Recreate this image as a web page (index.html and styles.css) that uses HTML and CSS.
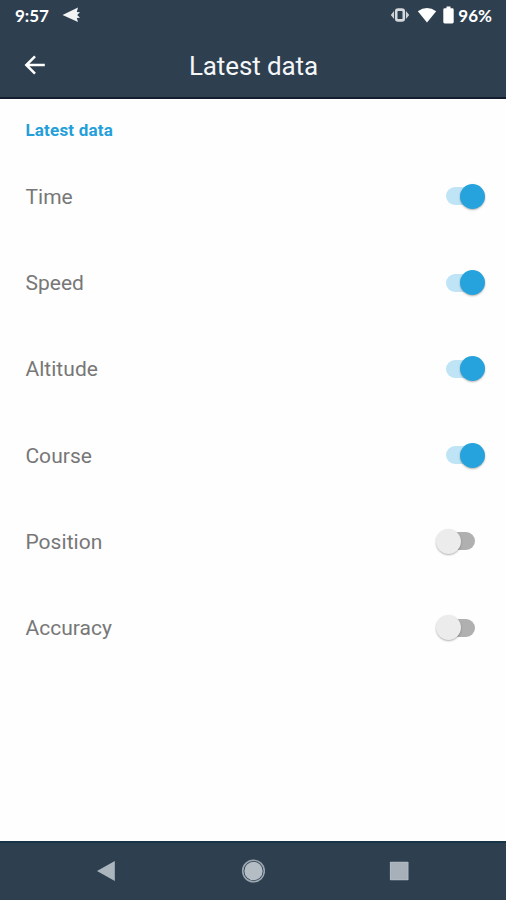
FILE: index.html
```html
<!DOCTYPE html>
<html lang="en">
<head>
    <meta charset="UTF-8">
    <meta name="viewport" content="width=device-width, initial-scale=1.0">
    <title>Latest data</title>
    <link rel="stylesheet" href="styles.css">
</head>
<body>
    <div class="screen">
        <div class="status-bar">
            <span class="clock">9:57</span>
            <svg class="plane" width="19" height="16" viewBox="0 0 19 16">
                <path d="M0.5 8 L16 0.6 L14.8 5 L18 5.3 L15.2 8 L18 10.7 L14.8 11 L16 15 Z" fill="#f1f3f4"/>
            </svg>
            <svg class="vibrate" width="20" height="16" viewBox="0 0 20 16">
                <path d="M4 4 L0.8 8 L4 12 Z M16 4 L19.2 8 L16 12 Z" fill="#ccd1d5"/>
                <rect x="6.2" y="2.6" width="7.6" height="10.8" rx="2" fill="none" stroke="#d5d9dc" stroke-width="2.6"/>
            </svg>
            <svg class="wifi" width="20" height="16" viewBox="0 0 20 16">
                <path d="M0.8 4.2 Q10 -2.4 19.2 4.2 L10 15.6 Z" fill="#fff"/>
            </svg>
            <svg class="battery" width="11" height="18" viewBox="0 0 11 18">
                <path d="M3.5 0.5 H7.5 V2.3 H9.3 Q10.7 2.3 10.7 3.7 V16 Q10.7 17.4 9.3 17.4 H1.7 Q0.3 17.4 0.3 16 V3.7 Q0.3 2.3 1.7 2.3 H3.5 Z" fill="#fff"/>
            </svg>
            <span class="percent">96%</span>
        </div>
        <div class="header">
            <svg class="back" width="22" height="20" viewBox="0 0 22 20">
                <path d="M20.8 10 H2.8 M11 1.3 L2.3 10 L11 18.7" fill="none" stroke="#fff" stroke-width="2.5"/>
            </svg>
            <h1 class="title">Latest data</h1>
        </div>
        <div class="content">
            <h2 class="section-title">Latest data</h2>
            <div class="row">
                <span class="label">Time</span>
                <div class="switch on"><div class="knob"></div></div>
            </div>
            <div class="row">
                <span class="label">Speed</span>
                <div class="switch on"><div class="knob"></div></div>
            </div>
            <div class="row">
                <span class="label">Altitude</span>
                <div class="switch on"><div class="knob"></div></div>
            </div>
            <div class="row">
                <span class="label">Course</span>
                <div class="switch on"><div class="knob"></div></div>
            </div>
            <div class="row">
                <span class="label">Position</span>
                <div class="switch"><div class="knob"></div></div>
            </div>
            <div class="row">
                <span class="label">Accuracy</span>
                <div class="switch"><div class="knob"></div></div>
            </div>
        </div>
        <div class="nav-bar">
            <svg width="20" height="22" viewBox="0 0 20 22">
                <path d="M0 11 L17.8 1 V21 Z" fill="#abb5be"/>
            </svg>
            <svg width="24" height="24" viewBox="0 0 24 24">
                <circle cx="12.5" cy="12" r="10.8" fill="none" stroke="#9ba6af" stroke-width="1.6"/>
                <circle cx="12.5" cy="12" r="9.2" fill="#b5bdc4"/>
            </svg>
            <svg width="20" height="20" viewBox="0 0 20 20">
                <rect x="0.9" y="0.7" width="18.6" height="18.6" rx="0.8" fill="#b2bac1"/>
                <rect x="1.9" y="1.7" width="16.6" height="16.6" fill="#a7b0b9"/>
            </svg>
        </div>
    </div>
</body>
</html>
```
FILE: styles.css
```css
body {
    margin: 0;
    background-color: #fefefe;
    font-family: Roboto, "Liberation Sans", sans-serif;
}
.screen {
    width: 506px;
    height: 900px;
    display: flex;
    flex-direction: column;
    overflow: hidden;
}
.status-bar {
    height: 32px;
    box-sizing: border-box;
    padding: 0 14px 2px 15px;
    background-color: #2e3f50;
    color: #fff;
    display: flex;
    align-items: center;
    font-family: Lato, sans-serif;
    font-size: 17px;
    font-weight: bold;
}
.plane {
    margin-left: 13px;
}
.vibrate {
    margin-left: auto;
}
.wifi {
    margin-left: 7px;
}
.battery {
    margin-left: 6px;
    margin-right: 4px;
}
.header {
    height: 67px;
    box-sizing: border-box;
    border-bottom: 2px solid #141c30;
    background-color: #2e3f50;
    display: grid;
    grid-template-columns: 60px 1fr 60px;
    align-items: center;
}
.back {
    margin-left: 24px;
}
.title {
    margin: 0;
    padding: 2px 0 0 1px;
    color: #f4f6f8;
    font-size: 26px;
    font-weight: normal;
    letter-spacing: -0.1px;
    text-align: center;
}
.content {
    flex: 1;
    padding: 0 31.5px 0 25.4px;
}
.section-title {
    margin: 0;
    height: 54.3px;
    box-sizing: border-box;
    line-height: 62px;
    color: #249fd9;
    font-size: 17px;
    font-weight: bold;
    letter-spacing: 0.2px;
}
.row {
    height: 86.25px;
    display: flex;
    justify-content: space-between;
    align-items: center;
}
.label {
    padding-top: 1px;
    color: #777;
    font-size: 21px;
    letter-spacing: 0.05px;
}
.switch {
    width: 29px;
    height: 18px;
    border-radius: 9px;
    background-color: #b0b0b0;
    display: flex;
    align-items: center;
}
.knob {
    flex: none;
    width: 25px;
    height: 25px;
    margin-left: -10px;
    border-radius: 50%;
    background-color: #ececec;
    box-shadow: 0 1px 2px rgba(0,0,0,0.3);
}
.on {
    background-color: #bee4f5;
}
.on .knob {
    margin-left: 14px;
    background-color: #26a3dd;
}
.nav-bar {
    height: 59px;
    box-sizing: border-box;
    padding: 0 97px 2px;
    border-top: 2px solid #183548;
    background-color: #2e3f50;
    display: flex;
    justify-content: space-between;
    align-items: center;
}
```
